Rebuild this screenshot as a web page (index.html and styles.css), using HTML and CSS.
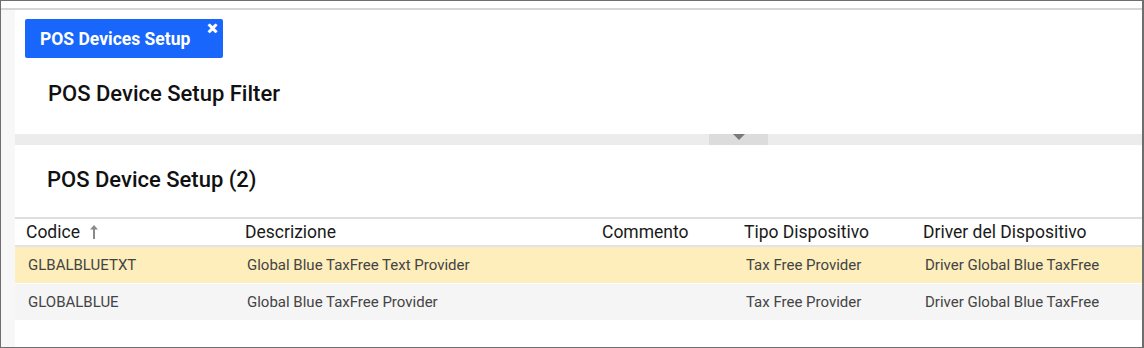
FILE: index.html
```html
<!DOCTYPE html>
<html>
<head>
<meta charset="utf-8">
<link rel="stylesheet" href="styles.css">
</head>
<body>
<div class="frame">
  <div class="topstrip"></div>
  <div class="main">
    <div class="leftstrip"></div>
    <div class="content">
      <div class="tabs">
        <div class="tab">
          <span class="tab-label">POS Devices Setup</span>
          <span class="tab-close">✕</span>
        </div>
      </div>
      <div class="section-title filter-title">POS Device Setup Filter</div>
      <div class="splitter">
        <div class="handle"><span class="tri"></span></div>
      </div>
      <div class="section-title list-title">POS Device Setup (2)</div>
      <div class="grid">
        <div class="row head">
          <div class="c c1">Codice <svg class="sort" width="10" height="15" viewBox="0 0 10 15"><path d="M5 1 L1 5.5 H4 V15 H6 V5.5 H9 Z" fill="#8a8a8a"/></svg></div>
          <div class="c c2">Descrizione</div>
          <div class="c c3">Commento</div>
          <div class="c c4">Tipo Dispositivo</div>
          <div class="c c5">Driver del Dispositivo</div>
        </div>
        <div class="row data sel">
          <div class="c c1">GLBALBLUETXT</div>
          <div class="c c2">Global Blue TaxFree Text Provider</div>
          <div class="c c3"></div>
          <div class="c c4">Tax Free Provider</div>
          <div class="c c5">Driver Global Blue TaxFree</div>
        </div>
        <div class="row data alt">
          <div class="c c1">GLOBALBLUE</div>
          <div class="c c2">Global Blue TaxFree Provider</div>
          <div class="c c3"></div>
          <div class="c c4">Tax Free Provider</div>
          <div class="c c5">Driver Global Blue TaxFree</div>
        </div>
      </div>
    </div>
  </div>
</div>
</body>
</html>
```
FILE: styles.css
```css
html, body {
  margin: 0;
  padding: 0;
  background: #ffffff;
}
body {
  font-family: Roboto, "Liberation Sans", sans-serif;
  width: 1144px;
  height: 348px;
  overflow: hidden;
}
.frame {
  box-sizing: border-box;
  width: 1144px;
  height: 348px;
  border: 1px solid #6e6e6e;
  border-right-width: 2px;
  display: flex;
  flex-direction: column;
  background: #fff;
}
.topstrip {
  height: 7px;
  border-bottom: 2px solid #d6d6d6;
  background: #fff;
  flex: none;
}
.main {
  flex: 1;
  display: flex;
  min-height: 0;
}
.leftstrip {
  width: 14px;
  background: #f7f7f7;
  flex: none;
}
.content {
  flex: 1;
  background: #fff;
  display: flex;
  flex-direction: column;
  min-width: 0;
}
.tabs {
  padding: 9px 0 0 10px;
  display: flex;
}
.tab {
  position: relative;
  box-sizing: border-box;
  width: 198px;
  height: 39px;
  background: #1866fb;
  border-radius: 2px;
  color: #fff;
  display: flex;
  align-items: center;
  padding-left: 15px;
}
.tab-label {
  font-size: 17.5px;
  font-weight: 700;
}
.tab-close {
  position: absolute;
  right: 5px;
  top: 2px;
  font-size: 13px;
  font-weight: 900;
  line-height: 16px;
  -webkit-text-stroke: 1px #fff;
}
.section-title {
  font-size: 22px;
  font-weight: 500;
  line-height: 26px;
  color: #111;
}
.filter-title {
  padding: 23px 0 0 33px;
  height: 53px;
}
.splitter {
  height: 11px;
  background: #ececec;
  display: flex;
  padding-left: 694px;
}
.handle {
  width: 59px;
  height: 11px;
  background: #dcdcdc;
  display: flex;
  justify-content: center;
}
.tri {
  width: 0;
  height: 0;
  border-left: 6px solid transparent;
  border-right: 6px solid transparent;
  border-top: 6px solid #7a7a7a;
}
.list-title {
  padding: 22px 0 0 32px;
  height: 50px;
}
.grid {
  border-top: 2px solid #dedede;
}
.row {
  display: flex;
  align-items: center;
}
.head {
  height: 26px;
  border-bottom: 2px solid #e3e3e3;
  font-size: 17.5px;
  color: #1a1a1a;
}
.head .c1 {
  padding-left: 11px;
}
.sort {
  vertical-align: -1px;
  margin-left: 5px;
}
.data {
  height: 36px;
  font-size: 15px;
  color: #444;
}
.data .c {
  padding-left: 2px;
}
.data .c1 {
  padding-left: 13px;
}
.sel {
  background: #fdeebb;
  margin-bottom: 1px;
}
.alt {
  background: #f5f5f5;
}
.c {
  box-sizing: border-box;
  white-space: nowrap;
}
.c1 { width: 230px; }
.c2 { width: 357px; }
.c3 { width: 142px; }
.c4 { width: 179px; }
.c5 { flex: 1; }
```
